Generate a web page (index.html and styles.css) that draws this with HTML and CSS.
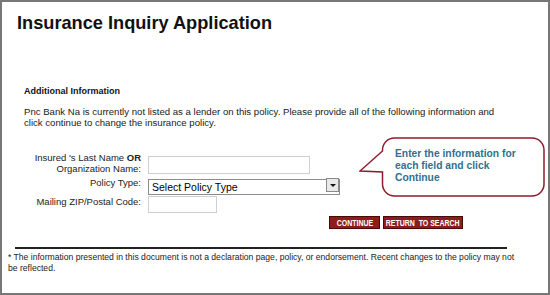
FILE: index.html
```html
<!DOCTYPE html>
<html lang="en">
<head>
    <meta charset="UTF-8">
    <title>Insurance Inquiry Application</title>
    <link rel="stylesheet" href="styles.css">
</head>
<body>
    <div class="page">
        <h1 class="title">Insurance Inquiry Application</h1>

        <div class="content">
            <h2 class="section-title">Additional Information</h2>
            <p class="intro">Pnc Bank Na is currently not listed as a lender on this policy. Please provide all of the following information and<br>click continue to change the insurance policy.</p>

            <form class="inquiry" onsubmit="return false;">
                <div class="form-grid">
                    <label class="field-label" for="lastName">Insured 's Last Name <b>OR</b><br>Organization Name:</label>
                    <input type="text" id="lastName" class="field-input name-input">

                    <label class="field-label" for="policyType">Policy Type:</label>
                    <div class="select-wrap">
                        <select id="policyType" class="policy-select">
                            <option>Select Policy Type</option>
                            <option>Homeowners</option>
                            <option>Auto</option>
                            <option>Flood</option>
                        </select>
                        <span class="select-arrow"></span>
                    </div>

                    <label class="field-label" for="zip">Mailing ZIP/Postal Code:</label>
                    <input type="text" id="zip" class="field-input zip-input">
                </div>

                <div class="actions">
                    <button class="red-button continue-button"><span class="button-label">CONTINUE</span></button>
                    <button class="red-button return-button"><span class="button-label">RETURN&nbsp; TO SEARCH</span></button>
                </div>

                <!-- Balão de ajuda -->
                <div class="callout">
                    <svg class="callout-shape" width="188" height="60" viewBox="0 0 188 60">
                        <path d="M35.5 1 H173 A12 12 0 0 1 185 13 V47 A12 12 0 0 1 173 59 H35.5 A12 12 0 0 1 23.5 47 V35 L1 34 L23.5 14 V13 A12 12 0 0 1 35.5 1 Z"
                              fill="#fff" stroke="#8e1c2c" stroke-width="1.5"/>
                    </svg>
                    <p class="callout-text">Enter the information for<br>each field and click<br>Continue</p>
                </div>
            </form>
        </div>

        <div class="footer">
            <p class="disclaimer">* The information presented in this document is not a declaration page, policy, or endorsement. Recent changes to the policy may not<br>be reflected.</p>
        </div>
    </div>
</body>
</html>
```

FILE: styles.css
```css
/* Moldura da página */
body {
    margin: 0;
    padding: 0;
    background-color: #ffffff;
    font-family: 'Liberation Sans', Arial, sans-serif;
    color: #1a1a1a;
}

.page {
    box-sizing: border-box;
    width: 550px;
    height: 295px;
    border: 2px solid #777777;
    background-color: #ffffff;
    overflow: hidden;
}

/* Título */
.title {
    margin: 0;
    padding: 10px 15px 0;
    font-size: 18.2px;
    line-height: 22px;
    font-weight: bold;
    color: #111111;
}

.content {
    padding-left: 22px;
    margin-top: 51px;
}

.section-title {
    margin: 0;
    font-size: 9px;
    line-height: 12px;
    font-weight: bold;
    color: #111111;
}

.intro {
    margin: 9px 0 0;
    font-size: 9.6px;
    line-height: 11px;
    color: #1a1a1a;
}

/* Formulário */
.inquiry {
    position: relative;
    margin-top: 24px;
}

.form-grid {
    display: grid;
    grid-template-columns: 117px auto;
    column-gap: 7px;
    row-gap: 3px;
    align-items: start;
    justify-items: start;
}

.field-label {
    justify-self: end;
    text-align: right;
    font-size: 9.5px;
    line-height: 11px;
    color: #222222;
}

.field-input {
    box-sizing: border-box;
    margin: 0;
    padding: 0 3px;
    border: 1px solid #cfcfcf;
    background-color: #ffffff;
    font-family: inherit;
    font-size: 10px;
}

.name-input {
    width: 162px;
    height: 18px;
    margin-top: 4px;
}

.zip-input {
    width: 69px;
    height: 17px;
}

.select-wrap {
    position: relative;
    width: 192px;
    height: 16px;
}

.policy-select {
    -webkit-appearance: none;
    appearance: none;
    box-sizing: border-box;
    width: 192px;
    height: 16px;
    margin: 0;
    padding: 0 0 0 3px;
    border: 1px solid #8c8c8c;
    border-radius: 0;
    background-color: #ffffff;
    font-family: inherit;
    font-size: 10.5px;
    color: #000000;
}

.select-arrow {
    position: absolute;
    top: 1px;
    right: 1px;
    box-sizing: border-box;
    width: 13px;
    height: 14px;
    border: 1px solid #8a8a8a;
    background-color: #e9e9e9;
    pointer-events: none;
}

.select-arrow::after {
    content: "";
    position: absolute;
    left: 3px;
    top: 5px;
    border-left: 3px solid transparent;
    border-right: 3px solid transparent;
    border-top: 3px solid #111111;
}

/* Botões vermelhos */
.actions {
    display: flex;
    gap: 3px;
    margin-top: 3px;
    padding-left: 305px;
}

.red-button {
    box-sizing: border-box;
    display: flex;
    justify-content: center;
    align-items: center;
    height: 13px;
    margin: 0;
    padding: 0;
    border: 1px solid #4a0808;
    background-color: #8b1d1d;
    color: #ffffff;
    font-family: 'Liberation Sans', sans-serif;
    font-size: 9.2px;
    font-weight: bold;
    white-space: nowrap;
    cursor: pointer;
}

.continue-button {
    width: 51px;
}

.return-button {
    width: 80px;
}

.button-label {
    display: inline-block;
    transform: scaleX(0.76);
}

/* Balão */
.callout {
    position: absolute;
    left: 335px;
    top: -15px;
    width: 188px;
    height: 60px;
}

.callout-shape {
    position: absolute;
    left: 0;
    top: 0;
}

.callout-text {
    position: relative;
    margin: 0;
    padding: 11px 0 0 36px;
    font-size: 10.3px;
    line-height: 12px;
    font-weight: bold;
    color: #31708f;
}

/* Rodapé */
.footer {
    margin-top: 18px;
    padding-left: 6px;
}

.footer::before {
    content: "";
    display: block;
    width: 492px;
    margin-left: 7px;
    border-top: 2px solid #222222;
}

.disclaimer {
    margin: 3px 0 0;
    font-size: 8.6px;
    line-height: 11px;
    color: #222222;
}
```
